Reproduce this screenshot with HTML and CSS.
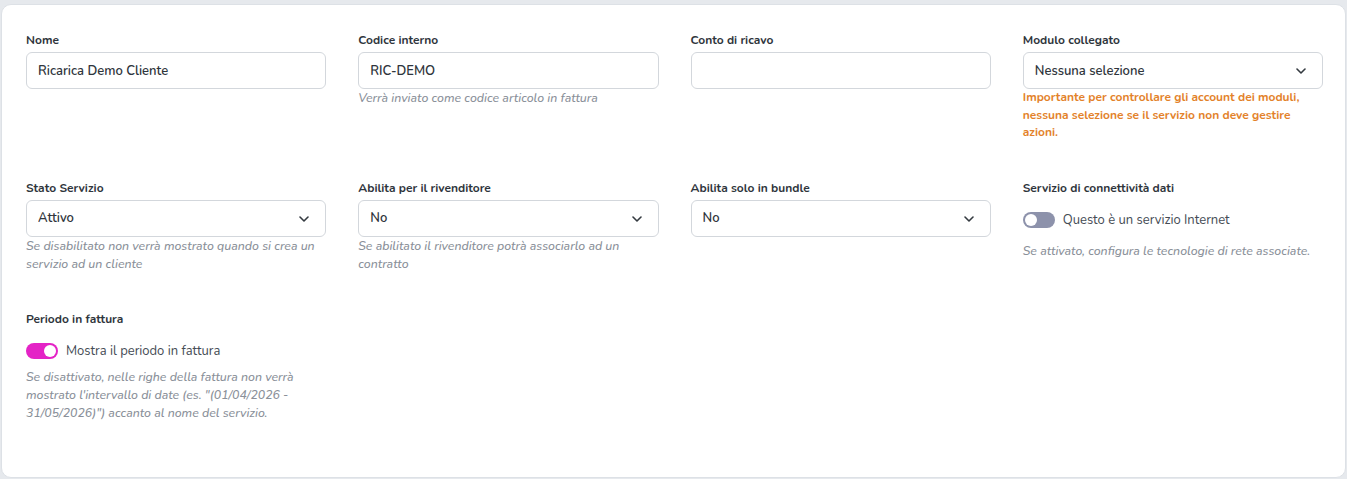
FILE: index.html
```html
<!DOCTYPE html>
<html lang="it">
<head>
  <meta charset="UTF-8">
  <meta name="viewport" content="width=device-width, initial-scale=1.0">
  <title>Servizio - Modifica</title>
  <link rel="stylesheet" href="styles.css">
</head>
<body>
  <div class="card">
    <form class="form-grid">
      <!-- Riga 1 -->
      <div class="field">
        <label class="field-label" for="nome">Nome</label>
        <input class="field-input" type="text" id="nome" value="Ricarica Demo Cliente">
      </div>
      <div class="field">
        <label class="field-label" for="codice">Codice interno</label>
        <input class="field-input" type="text" id="codice" value="RIC-DEMO">
        <div class="hint">Verrà inviato come codice articolo in fattura</div>
      </div>
      <div class="field">
        <label class="field-label" for="conto">Conto di ricavo</label>
        <input class="field-input" type="text" id="conto" value="">
      </div>
      <div class="field">
        <label class="field-label" for="modulo">Modulo collegato</label>
        <div class="select-wrap">
          <select class="field-input field-select" id="modulo">
            <option>Nessuna selezione</option>
          </select>
          <svg class="chevron" viewBox="0 0 10 6" width="10" height="6"><path d="M1 1l4 4 4-4" fill="none" stroke="#343a40" stroke-width="1.6" stroke-linecap="round" stroke-linejoin="round"/></svg>
        </div>
        <div class="warning">Importante per controllare gli account dei moduli, nessuna selezione se il servizio non deve gestire azioni.</div>
      </div>

      <!-- Riga 2 -->
      <div class="field">
        <label class="field-label" for="stato">Stato Servizio</label>
        <div class="select-wrap">
          <select class="field-input field-select" id="stato">
            <option>Attivo</option>
          </select>
          <svg class="chevron" viewBox="0 0 10 6" width="10" height="6"><path d="M1 1l4 4 4-4" fill="none" stroke="#343a40" stroke-width="1.6" stroke-linecap="round" stroke-linejoin="round"/></svg>
        </div>
        <div class="hint">Se disabilitato non verrà mostrato quando si crea un servizio ad un cliente</div>
      </div>
      <div class="field">
        <label class="field-label" for="rivenditore">Abilita per il rivenditore</label>
        <div class="select-wrap">
          <select class="field-input field-select" id="rivenditore">
            <option>No</option>
          </select>
          <svg class="chevron" viewBox="0 0 10 6" width="10" height="6"><path d="M1 1l4 4 4-4" fill="none" stroke="#343a40" stroke-width="1.6" stroke-linecap="round" stroke-linejoin="round"/></svg>
        </div>
        <div class="hint">Se abilitato il rivenditore potrà associarlo ad un contratto</div>
      </div>
      <div class="field">
        <label class="field-label" for="bundle">Abilita solo in bundle</label>
        <div class="select-wrap">
          <select class="field-input field-select" id="bundle">
            <option>No</option>
          </select>
          <svg class="chevron" viewBox="0 0 10 6" width="10" height="6"><path d="M1 1l4 4 4-4" fill="none" stroke="#343a40" stroke-width="1.6" stroke-linecap="round" stroke-linejoin="round"/></svg>
        </div>
      </div>
      <div class="field">
        <span class="field-label">Servizio di connettività dati</span>
        <label class="switch">
          <input type="checkbox">
          <span class="switch-track"><span class="switch-knob"></span></span>
          <span class="switch-text">Questo è un servizio Internet</span>
        </label>
        <div class="hint hint-spaced">Se attivato, configura le tecnologie di rete associate.</div>
      </div>

      <!-- Riga 3 -->
      <div class="field">
        <span class="field-label">Periodo in fattura</span>
        <label class="switch">
          <input type="checkbox" checked>
          <span class="switch-track"><span class="switch-knob"></span></span>
          <span class="switch-text">Mostra il periodo in fattura</span>
        </label>
        <div class="hint">Se disattivato, nelle righe della fattura non verrà mostrato l'intervallo di date (es. "(01/04/2026 - 31/05/2026)") accanto al nome del servizio.</div>
      </div>
    </form>
  </div>
</body>
</html>
```

FILE: styles.css
```css
/* General */
body {
  margin: 0;
  padding: 4px 1px 0 1px;
  background: #e6e9ed;
  font-family: "Nunito", "Lato", "Noto Sans", sans-serif;
  color: #343a40;
}

.card {
  box-sizing: border-box;
  height: 474px;
  background: #ffffff;
  border: 1px solid #dde1e6;
  border-radius: 10px;
  padding: 26px 22px 24px 24px;
}

.form-grid {
  display: grid;
  grid-template-columns: repeat(4, 1fr);
  column-gap: 32px;
  row-gap: 37px;
  align-items: start;
}

.field {
  display: flex;
  flex-direction: column;
}

.field-label {
  font-size: 12px;
  font-weight: 700;
  line-height: 18px;
  color: #2f353c;
  margin-bottom: 3px;
}

.field-input {
  box-sizing: border-box;
  width: 100%;
  height: 37px;
  padding: 0 11px;
  border: 1px solid #d3d7dc;
  border-radius: 6px;
  background: #ffffff;
  font-family: inherit;
  font-size: 13px;
  font-weight: 600;
  color: #2f353c;
  outline: none;
}

/* Select */
.select-wrap {
  position: relative;
}

.field-select {
  appearance: none;
  -webkit-appearance: none;
}

.chevron {
  position: absolute;
  right: 17px;
  top: 16px;
  pointer-events: none;
}

/* Helper texts */
.hint {
  font-size: 12.3px;
  font-style: italic;
  font-weight: 500;
  line-height: 18px;
  color: #8a9099;
}

.hint-spaced {
  margin-top: 5px;
}

.warning {
  font-size: 12px;
  font-weight: 700;
  line-height: 17.5px;
  color: #e3822a;
}

/* Toggle */
.switch {
  display: flex;
  align-items: center;
  gap: 8px;
  height: 22px;
  margin: 9px 0 6px;
  cursor: pointer;
}

.switch input {
  display: none;
}

.switch-track {
  box-sizing: border-box;
  display: flex;
  align-items: center;
  justify-content: flex-start;
  width: 32px;
  height: 16px;
  padding: 0 2px;
  border-radius: 8px;
  background: #8d92ab;
}

.switch-knob {
  width: 12px;
  height: 12px;
  border-radius: 50%;
  background: #ffffff;
}

.switch input:checked + .switch-track {
  justify-content: flex-end;
  background: #e423c6;
}

.switch-text {
  font-size: 13px;
  color: #454c55;
}
```
